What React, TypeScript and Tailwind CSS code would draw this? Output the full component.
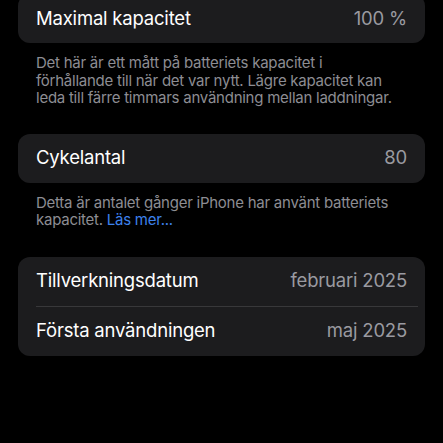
import React from "react";

const font = { fontFamily: "Inter, 'Noto Sans', sans-serif" };

function Row({ label, value }: { label: string; value: string }) {
  return (
    <div className="flex h-[49px] items-center justify-between pl-[18px] pr-[18px]">
      <span className="text-[18.5px] tracking-[-0.2px] text-white">{label}</span>
      <span className="text-[18.5px] tracking-[-0.2px] text-[#9a9aa0]">{value}</span>
    </div>
  );
}

export default function App() {
  return (
    <div className="h-[443px] w-[443px] overflow-hidden bg-black px-[18px]" style={font}>
      <div className="-mt-[6px] rounded-[12px] bg-[#1c1c1e]">
        <Row label="Maximal kapacitet" value="100 %" />
      </div>
      <p className="pl-[18px] pr-[29px] pt-[11px] text-[15px] leading-[17.5px] tracking-[-0.25px] text-[#8d8d93]">
        Det här är ett mått på batteriets kapacitet i förhållande till när det var nytt. Lägre kapacitet kan leda till färre timmars användning mellan laddningar.
      </p>
      <div className="mt-[27px] rounded-[12px] bg-[#1c1c1e]">
        <Row label="Cykelantal" value="80" />
      </div>
      <p className="pl-[18px] pr-[29px] pt-[11px] text-[15px] leading-[17.5px] tracking-[-0.25px] text-[#8d8d93]">
        Detta är antalet gånger iPhone har använt batteriets kapacitet.{" "}
        <span className="text-[#3d82ec]">Läs mer...</span>
      </p>
      <div className="mt-[28px] rounded-[12px] bg-[#1c1c1e]">
        <Row label="Tillverkningsdatum" value="februari 2025" />
        <div className="ml-[18px] mr-[7px] h-px bg-[#38383a]" />
        <Row label="Första användningen" value="maj 2025" />
      </div>
    </div>
  );
}
